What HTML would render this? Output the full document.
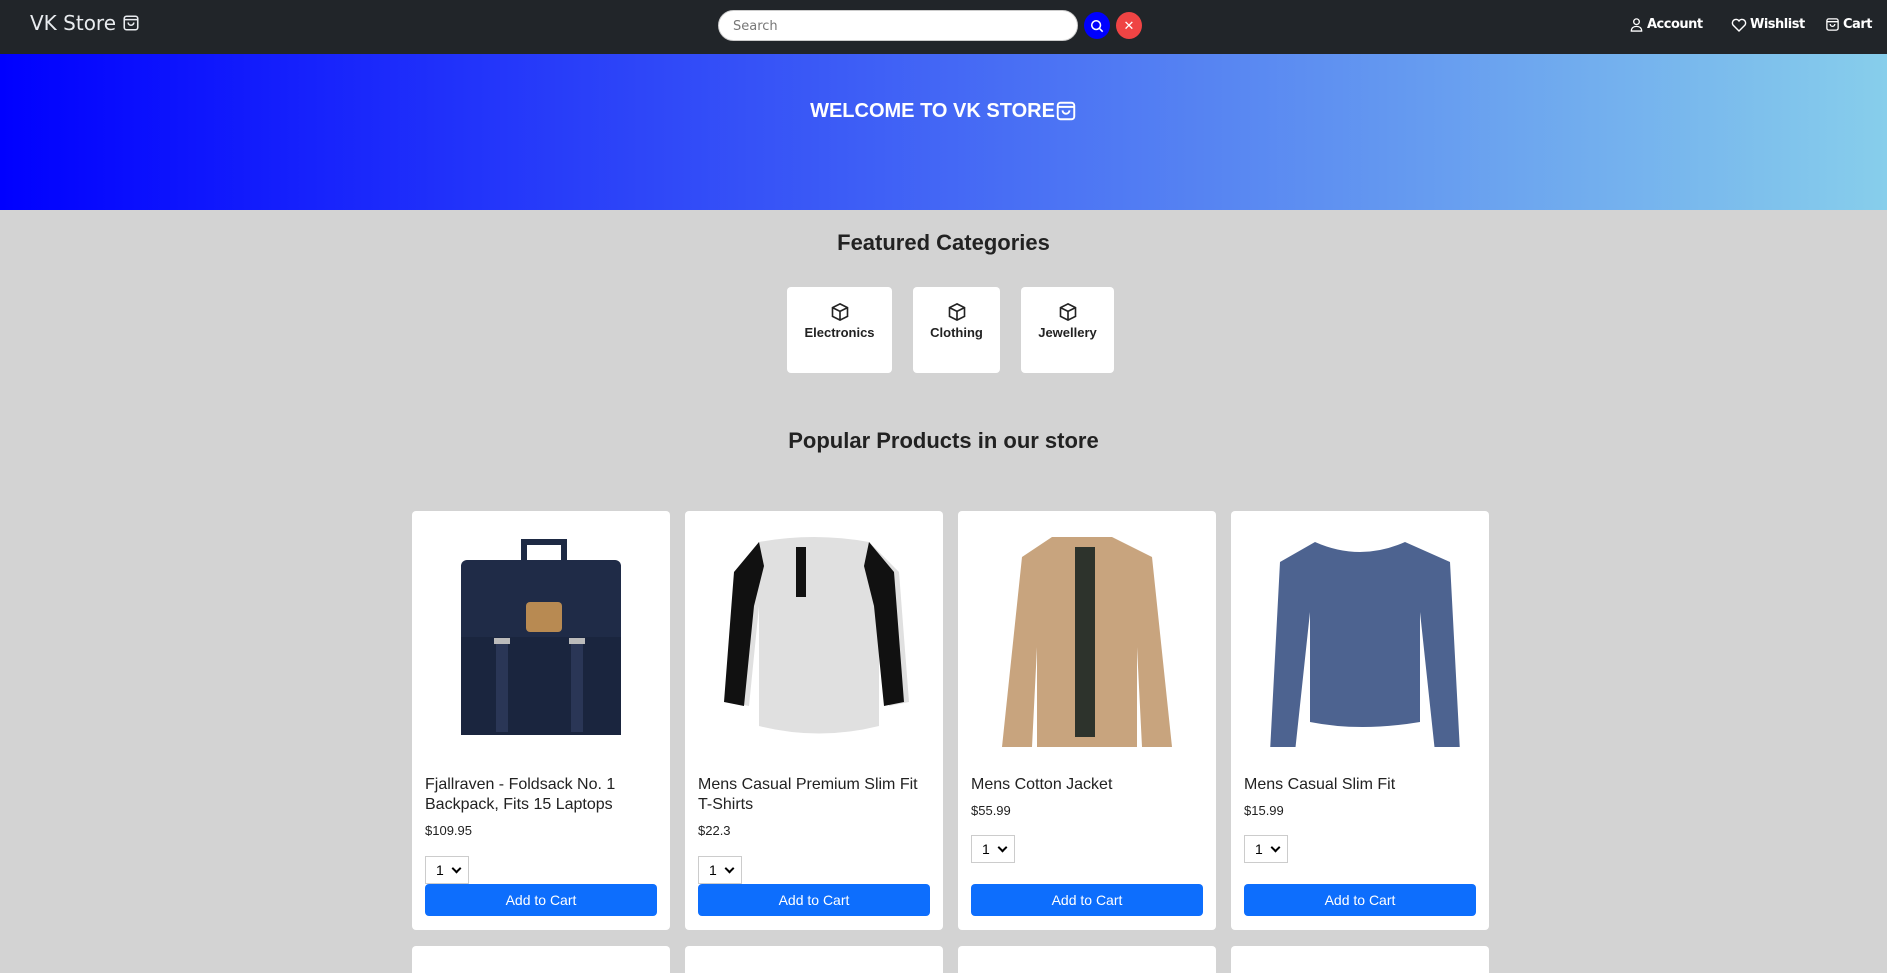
<!DOCTYPE html>
<html><head><meta charset="utf-8"><style>
*{box-sizing:border-box;margin:0;padding:0}
html,body{width:1887px;height:973px;overflow:hidden}
body{background:#d3d3d3;font-family:"Liberation Sans",Arial,sans-serif;position:relative}
.nav{position:absolute;left:0;top:0;width:1887px;height:54px;background:#212529;color:#fff}
.logo{position:absolute;left:30px;top:11px;font-size:20px;font-family:"DejaVu Sans","Liberation Sans",sans-serif;color:#e9ecef;display:flex;align-items:center;gap:6px}
.search{position:absolute;left:718px;top:10px;width:360px;height:31px;border-radius:16px;background:#fff;border:1px solid #ccc;font-size:13px;color:#777;padding:8px 14px;font-family:"DejaVu Sans",sans-serif}
.circ{position:absolute;top:12px;width:26px;height:27px;border-radius:50%;display:flex;align-items:center;justify-content:center}
.links{position:absolute;top:17px;font-size:13px;font-weight:bold;display:flex;align-items:center;gap:3px;font-family:"DejaVu Sans",sans-serif;letter-spacing:-0.5px}
.banner{position:absolute;left:0;top:54px;width:1887px;height:156px;background:linear-gradient(90deg,#0000ff,#87ceeb);color:#fff;font-weight:bold;font-size:20px;display:flex;justify-content:center;padding-top:46px}
h2{position:absolute;left:0;width:1887px;text-align:center;font-size:22px;color:#222}
.cat{position:absolute;top:287px;height:86px;background:#fff;border-radius:4px;text-align:center;font-size:13px;font-weight:bold;color:#222;padding-top:15px}
.cat svg{display:block;margin:0 auto 3px}
.card{position:absolute;top:511px;height:419px;width:258px;background:#fff;border-radius:4px;padding:0 13px 13px}
.card.r2{top:946px;height:27px;border-radius:4px 4px 0 0}
.img{height:230px;margin-top:11px;display:flex;justify-content:center;align-items:center}
.t{margin-top:23px;font-size:16px;color:#222;line-height:20px}
.p{margin-top:8px;font-size:13px;color:#222}
.sel{position:absolute;left:13px;width:44px;height:28px;border:1px solid #ccc;font-size:14px;padding:5px 0 0 10px}
.sel:after{content:"";position:absolute;right:8px;top:8px;width:5px;height:5px;border-right:2px solid #000;border-bottom:2px solid #000;transform:rotate(45deg)}
.btn{position:absolute;left:13px;right:13px;top:373px;height:32px;background:#0d6efd;color:#fff;border-radius:4px;text-align:center;font-size:14px;line-height:32px}
</style></head><body>
<div class="nav">
 <div class="logo">VK Store <svg width="18" height="18" viewBox="0 0 16 16" fill="none" stroke="#e9ecef" stroke-width="1.4"><rect x="2" y="2" width="12" height="12" rx="2"/><path d="M2 5h12M5.5 7.5a2.5 2.5 0 0 0 5 0"/></svg></div>
 <div class="search">Search</div>
 <div class="circ" style="left:1084px;background:#0000ff"><svg width="14" height="14" viewBox="0 0 16 16" fill="none" stroke="#fff" stroke-width="1.8"><circle cx="7" cy="7" r="5"/><path d="M11 11l3.5 3.5"/></svg></div>
 <div class="circ" style="left:1116px;background:#ef4444;color:#fff;font-size:13px">✕</div>
 <div class="links" style="left:1629px"><svg width="15" height="15" viewBox="0 0 16 16" fill="none" stroke="#fff" stroke-width="1.4"><circle cx="8" cy="5" r="3"/><path d="M2.5 15c0-3.5 2.5-5 5.5-5s5.5 1.5 5.5 5z"/></svg> Account</div>
 <div class="links" style="left:1731px"><svg width="16" height="15" viewBox="0 0 16 15" fill="none" stroke="#fff" stroke-width="1.4"><path d="M8 14L2 8a3.4 3.4 0 0 1 6-4 3.4 3.4 0 0 1 6 4z"/></svg>Wishlist</div>
 <div class="links" style="left:1825px"><svg width="15" height="15" viewBox="0 0 16 16" fill="none" stroke="#fff" stroke-width="1.4"><rect x="2" y="2" width="12" height="12" rx="2"/><path d="M2 5h12M5.5 7.5a2.5 2.5 0 0 0 5 0"/></svg>Cart</div>
</div>
<div class="banner">WELCOME TO VK STORE<svg width="22" height="22" viewBox="0 0 16 16" fill="none" stroke="#fff" stroke-width="1.4"><rect x="2" y="2" width="12" height="12" rx="2"/><path d="M2 5h12M5.5 7.5a2.5 2.5 0 0 0 5 0"/></svg></div>
<h2 style="top:230px">Featured Categories</h2>
<div class="cat" style="left:787px;width:105px"><svg width="20" height="20" viewBox="0 0 16 16" fill="none" stroke="#222" stroke-width="1.3"><path d="M8 1.5l6 3v7l-6 3-6-3v-7zM2 4.5l6 3 6-3M8 7.5v7"/></svg>Electronics</div>
<div class="cat" style="left:913px;width:87px"><svg width="20" height="20" viewBox="0 0 16 16" fill="none" stroke="#222" stroke-width="1.3"><path d="M8 1.5l6 3v7l-6 3-6-3v-7zM2 4.5l6 3 6-3M8 7.5v7"/></svg>Clothing</div>
<div class="cat" style="left:1021px;width:93px"><svg width="20" height="20" viewBox="0 0 16 16" fill="none" stroke="#222" stroke-width="1.3"><path d="M8 1.5l6 3v7l-6 3-6-3v-7zM2 4.5l6 3 6-3M8 7.5v7"/></svg>Jewellery</div>
<h2 style="top:428px">Popular Products in our store</h2>

<div class="card" style="left:412px">
 <div class="img"><svg width="210" height="210" viewBox="0 0 210 210"><path d="M88 30v-20h40v20" fill="none" stroke="#1e2a44" stroke-width="6"/><rect x="25" y="28" width="160" height="175" rx="6" fill="#1f2b47"/><rect x="25" y="105" width="160" height="98" fill="#1a253e"/><rect x="90" y="70" width="36" height="30" rx="4" fill="#b88a52"/><rect x="60" y="110" width="12" height="90" fill="#2a3656"/><rect x="135" y="110" width="12" height="90" fill="#2a3656"/><rect x="58" y="106" width="16" height="6" fill="#bbb"/><rect x="133" y="106" width="16" height="6" fill="#bbb"/></svg></div>
 <div class="t">Fjallraven - Foldsack No. 1 Backpack, Fits 15 Laptops</div>
 <div class="p">$109.95</div>
 <div class="sel" style="top:345px">1</div>
 <div class="btn">Add to Cart</div>
</div>
<div class="card" style="left:685px">
 <div class="img"><svg width="220" height="220" viewBox="0 0 220 220"><path d="M55 15q55-10 110 0l30 30 10 130-20 4-10-100v120q-60 15-120 0v-120l-10 100-20-4 10-130z" fill="#e0e0e0"/><path d="M55 15l-25 30-10 130 20 4 10-100 10-40zM165 15l25 30 10 130-20 4-10-100-10-40z" fill="#111"/><rect x="92" y="20" width="10" height="50" fill="#111"/></svg></div>
 <div class="t">Mens Casual Premium Slim Fit T-Shirts</div>
 <div class="p">$22.3</div>
 <div class="sel" style="top:345px">1</div>
 <div class="btn">Add to Cart</div>
</div>
<div class="card" style="left:958px">
 <div class="img"><svg width="220" height="220" viewBox="0 0 220 220"><path d="M75 10h60l40 20 20 190h-30l-5-100v100h-100v-100l-5 100h-30l20-190z" fill="#c8a47e"/><path d="M98 20h20v190h-20z" fill="#2d332c"/></svg></div>
 <div class="t">Mens Cotton Jacket</div>
 <div class="p">$55.99</div>
 <div class="sel" style="top:324px">1</div>
 <div class="btn">Add to Cart</div>
</div>
<div class="card" style="left:1231px">
 <div class="img"><svg width="220" height="220" viewBox="0 0 220 220"><path d="M65 15q45 20 90 0l45 20 10 190h-25l-15-140v110q-60 10-110 0v-110l-15 140h-25l10-190z" fill="#4d6390"/></svg></div>
 <div class="t">Mens Casual Slim Fit</div>
 <div class="p">$15.99</div>
 <div class="sel" style="top:324px">1</div>
 <div class="btn">Add to Cart</div>
</div>
<div class="card r2" style="left:412px"></div>
<div class="card r2" style="left:685px"></div>
<div class="card r2" style="left:958px"></div>
<div class="card r2" style="left:1231px"></div>
</body></html>
